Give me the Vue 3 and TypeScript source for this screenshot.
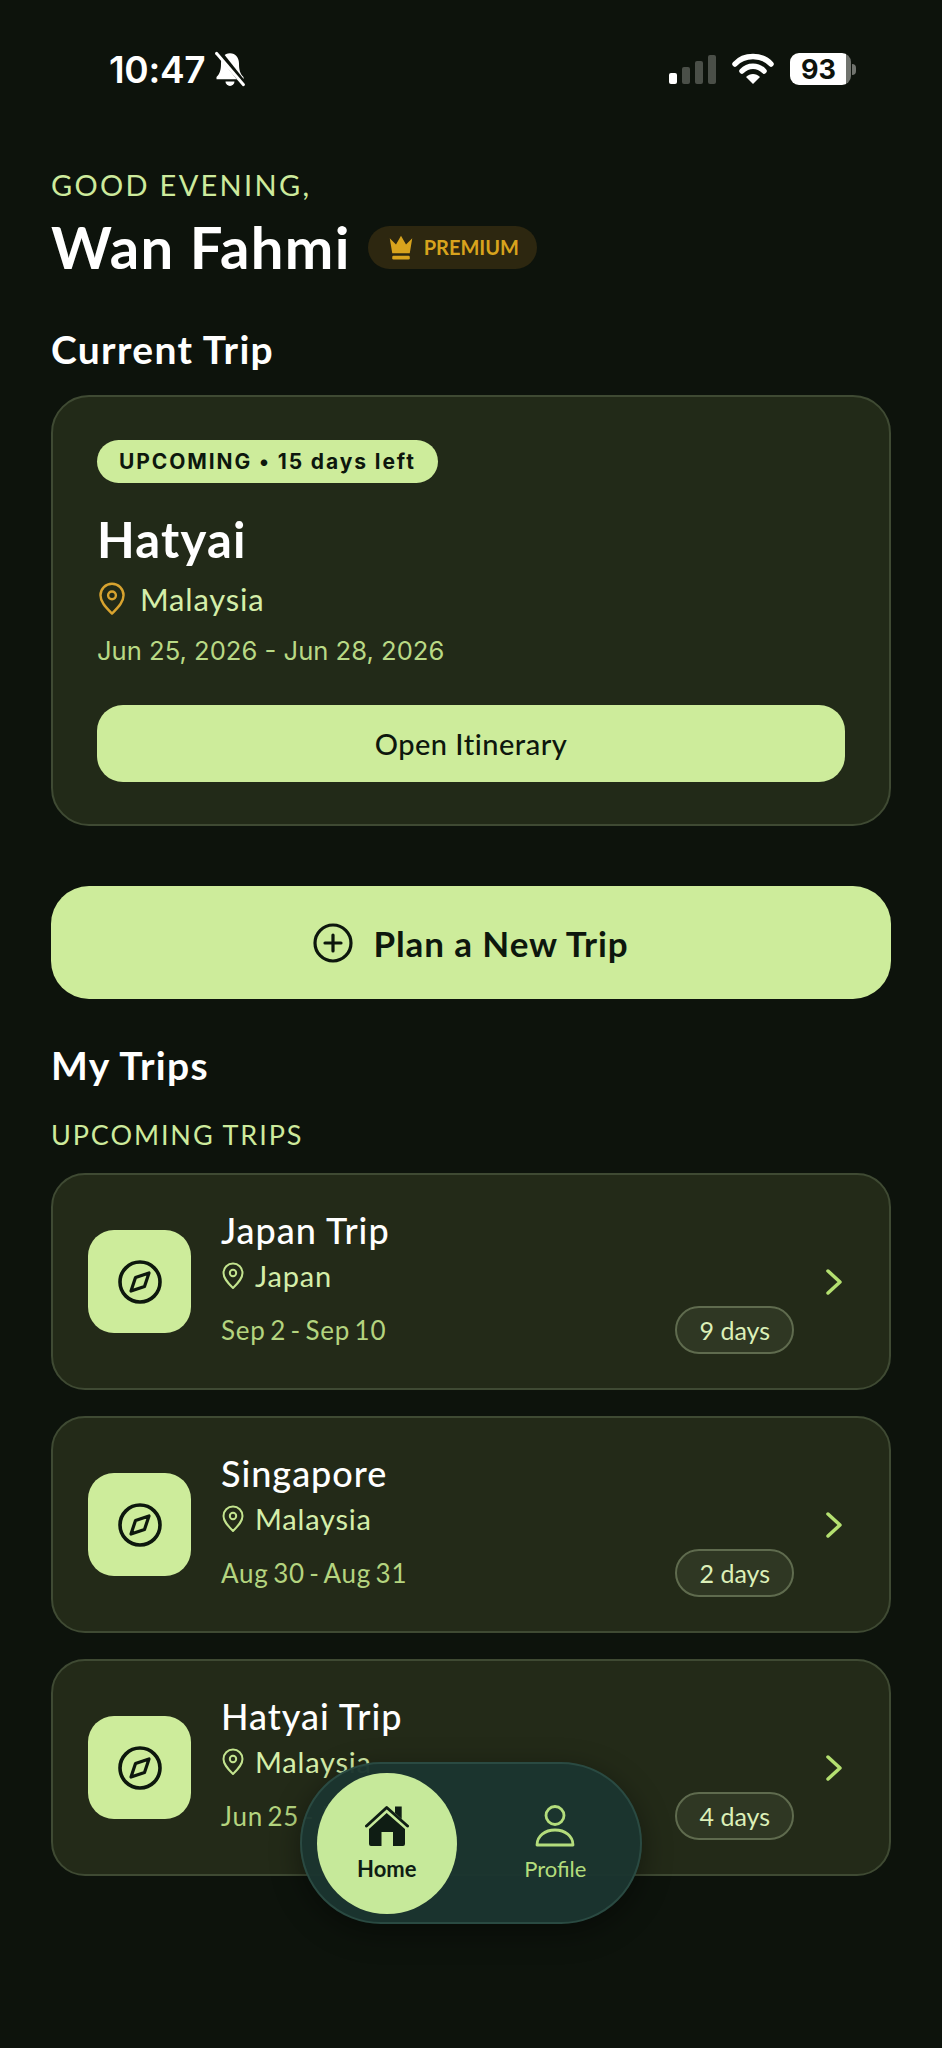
<template>
  <div class="screen">
    <header class="status">
      <div class="status-left">
        <span class="clock">10:47</span>
        <svg class="bell" viewBox="0 0 32 32" width="36" height="36">
          <path d="M16 2c-5 0-8 4-8 9 0 6-1 9-4 12v2h24v-2c-3-3-4-6-4-12 0-5-3-9-8-9z" fill="#fff" />
          <path d="M12 27a4 4 0 0 0 8 0z" fill="#fff" />
          <path d="M6 1l23 29" stroke="#0d130c" stroke-width="5" />
          <path d="M4 2l24 28" stroke="#fff" stroke-width="2.600" stroke-linecap="round" />
        </svg>
      </div>
      <div class="status-right">
        <div class="signal">
          <i class="on"></i><i></i><i></i><i></i>
        </div>
        <svg viewBox="0 0 42 32" width="42" height="32">
          <path d="M3 11C12 1 30 1 39 11" fill="none" stroke="#fff" stroke-width="5.500" stroke-linecap="round" />
          <path d="M10 18C16 11.500 26 11.500 32 18" fill="none" stroke="#fff" stroke-width="5.500" stroke-linecap="round" />
          <path d="M14 24C18 20 24 20 28 24L21 31z" fill="#fff" />
        </svg>
        <div class="battery">
          <div class="battery-body"><span>93</span></div>
          <div class="battery-cap"></div>
        </div>
      </div>
    </header>

    <main class="content">
      <p class="greeting">GOOD EVENING,</p>
      <div class="name-row">
        <h1>Wan Fahmi</h1>
        <span class="premium">
          <svg viewBox="0 0 24 24" width="30" height="30">
            <path d="M3 5l5 5 4-7 4 7 5-5-2 12H5z" fill="#d8a31d" />
            <rect x="5" y="19" width="14" height="3" rx="1" fill="#d8a31d" />
          </svg>
          PREMIUM
        </span>
      </div>

      <h2 class="current-title">Current Trip</h2>
      <section class="current">
        <span class="tag">UPCOMING • 15 days left</span>
        <h3>Hatyai</h3>
        <div class="current-place">
          <svg viewBox="0 0 24 28" width="30" height="34" fill="none" stroke="#d8a32f" stroke-width="2">
            <path d="M12 26C6 20 2.500 16 2.500 11a9.500 9.500 0 0 1 19 0c0 5-3.500 9-9.500 15z" stroke-linejoin="round" />
            <circle cx="12" cy="11" r="3.200" />
          </svg>
          <span>Malaysia</span>
        </div>
        <p class="current-dates">Jun 25, 2026 - Jun 28, 2026</p>
        <button class="open">Open Itinerary</button>
      </section>

      <button class="plan">
        <svg viewBox="0 0 40 40" width="40" height="40" fill="none" stroke="#0d170d" stroke-width="3.200" stroke-linecap="round">
          <circle cx="20" cy="20" r="18" />
          <path d="M20 12v16M12 20h16" />
        </svg>
        Plan a New Trip
      </button>

      <h2 class="my-title">My Trips</h2>
      <p class="sub-title">UPCOMING TRIPS</p>

      <div class="trips">
        <article v-for="t in trips" :key="t.name" class="trip">
          <div class="trip-icon">
            <svg viewBox="0 0 44 44" width="44" height="44" fill="none" stroke="#0d170d" stroke-width="3.600">
              <circle cx="22" cy="22" r="20" />
              <path d="M31 13L26.500 26.500 13 31 17.500 17.500z" stroke-width="3.200" stroke-linejoin="round" />
            </svg>
          </div>
          <div class="trip-body">
            <h4>{{ t.name }}</h4>
            <div class="trip-place">
              <svg viewBox="0 0 24 28" width="24" height="28" fill="none" stroke="#c3e48e" stroke-width="2">
                <path d="M12 26C6 20 2.500 16 2.500 11a9.500 9.500 0 0 1 19 0c0 5-3.500 9-9.500 15z" stroke-linejoin="round" />
                <circle cx="12" cy="11" r="3.200" />
              </svg>
              <span>{{ t.place }}</span>
            </div>
            <div class="trip-foot">
              <span class="trip-dates">{{ t.dates }}</span>
              <span class="days">{{ t.days }}</span>
            </div>
          </div>
          <svg class="chev" viewBox="0 0 18 28" width="18" height="28" fill="none" stroke="#b4e070" stroke-width="3.500" stroke-linecap="round" stroke-linejoin="round">
            <path d="M3 3l12 11L3 25" />
          </svg>
        </article>
      </div>
    </main>

    <nav class="nav">
      <div class="nav-item active">
        <svg viewBox="0 0 44 42" width="44" height="42">
          <path d="M1.500 21L21.700 2.500 42.500 21" fill="none" stroke="#0f1d14" stroke-width="3" stroke-linecap="round" stroke-linejoin="round" />
          <path d="M30 1.500h6.700V14L30 8z" fill="#0f1d14" />
          <path d="M21.700 8L40 24v15a2 2 0 0 1-2 2H28V27H16.500v14H6a2 2 0 0 1-2-2V24z" fill="#0f1d14" />
        </svg>
        <span>Home</span>
      </div>
      <div class="nav-item">
        <svg viewBox="0 0 40 42" width="40" height="42" fill="none" stroke="#b4dd7c" stroke-width="2.800" stroke-linejoin="round">
          <circle cx="20" cy="10.500" r="9" />
          <path d="M2 40c0-9 8-15 18-15s18 6 18 15z" />
        </svg>
        <span>Profile</span>
      </div>
    </nav>
  </div>
</template>

<script setup lang="ts">
interface Trip {
  name: string;
  place: string;
  dates: string;
  days: string;
}

const trips: Trip[] = [
  { name: 'Japan Trip', place: 'Japan', dates: 'Sep 2 - Sep 10', days: '9 days' },
  { name: 'Singapore', place: 'Malaysia', dates: 'Aug 30 - Aug 31', days: '2 days' },
  { name: 'Hatyai Trip', place: 'Malaysia', dates: 'Jun 25 - Jun 28', days: '4 days' },
];
</script>

<style>
html,
body {
  margin: 0;
  background: #0d130c;
}
</style>

<style scoped>
.screen {
  position: relative;
  width: 942px;
  height: 2048px;
  overflow: hidden;
  background: #0d130c;
  color: #fff;
  font-family: Lato, "Noto Sans", sans-serif;
}
h1, h2, h3, h4, p {
  margin: 0;
}
.status {
  display: flex;
  justify-content: space-between;
  align-items: center;
  height: 32px;
  padding: 53px 86px 0 109px;
}
.status-left, .status-right {
  display: flex;
  align-items: center;
}
.status-left { gap: 7px; }
.status-right { gap: 16px; }
.clock {
  font-family: Inter, sans-serif;
  font-size: 37px;
  font-weight: 600;
  letter-spacing: -0.300px;
}
.signal {
  display: flex;
  align-items: flex-end;
  gap: 5px;
  height: 30px;
}
.signal i {
  width: 8px;
  background: #4a4f48;
  border-radius: 2px;
}
.signal i:nth-child(1) { height: 11px; background: #fff; }
.signal i:nth-child(2) { height: 17px; }
.signal i:nth-child(3) { height: 23px; }
.signal i:nth-child(4) { height: 29px; }
.battery {
  display: flex;
  align-items: center;
  gap: 1px;
}
.battery-body {
  width: 61px;
  height: 32px;
  border-radius: 9px;
  background: linear-gradient(90deg, #fff 92%, #70736e 92%);
  display: flex;
  align-items: center;
  justify-content: center;
  padding-right: 4px;
  box-sizing: border-box;
}
.battery-body span {
  color: #0d130c;
  font-family: Inter, sans-serif;
  font-size: 27px;
  font-weight: 700;
}
.battery-cap {
  width: 4px;
  height: 11px;
  background: #70736e;
  border-radius: 0 4px 4px 0;
}
.content {
  padding: 82px 51px 0;
}
.greeting {
  color: #cdea9c;
  font-size: 29px;
  line-height: 36px;
  letter-spacing: 2.300px;
}
.name-row {
  display: flex;
  align-items: center;
  gap: 17px;
  margin-top: 9px;
}
h1 {
  font-size: 58px;
  line-height: 70px;
  font-weight: 700;
  letter-spacing: 1.300px;
}
.premium {
  display: inline-flex;
  align-items: center;
  gap: 8px;
  height: 43px;
  padding: 0 18px 0 18px;
  border-radius: 22px;
  background: #2d2710;
  color: #d8a31d;
  font-size: 20px;
  font-weight: 700;
}
.current-title {
  margin-top: 44px;
  font-size: 39px;
  line-height: 46px;
  font-weight: 700;
  letter-spacing: 1.300px;
}
.current {
  box-sizing: border-box;
  height: 431px;
  margin-top: 23px;
  padding: 43px 44px;
  border: 2px solid #3f4a33;
  border-radius: 38px;
  background: #222a18;
}
.tag {
  display: inline-block;
  padding: 0 22px;
  height: 43px;
  line-height: 43px;
  border-radius: 22px;
  background: #cdec9b;
  color: #0d170d;
  font-family: Inter, sans-serif;
  font-size: 21px;
  font-weight: 700;
  letter-spacing: 1.900px;
}
h3 {
  margin-top: 27px;
  font-size: 49px;
  line-height: 58px;
  font-weight: 700;
  letter-spacing: 1.200px;
}
.current-place {
  display: flex;
  align-items: center;
  gap: 13px;
  margin-top: 12px;
  color: #d5eea9;
  font-size: 31px;
  line-height: 38px;
  letter-spacing: 0.800px;
}
.current-dates {
  margin-top: 15px;
  color: #b9d985;
  font-family: Inter, sans-serif;
  font-size: 25.600px;
  line-height: 36px;
}
.open {
  display: block;
  width: 100%;
  height: 77px;
  margin-top: 36px;
  border: 0;
  border-radius: 26px;
  background: #cdec9b;
  color: #0d170d;
  font-family: inherit;
  font-size: 29px;
  font-weight: 500;
  letter-spacing: 0.500px;
}
.plan {
  display: flex;
  align-items: center;
  justify-content: center;
  gap: 20px;
  width: 100%;
  height: 113px;
  margin-top: 60px;
  border: 0;
  border-radius: 38px;
  background: #cdec9b;
  color: #0d170d;
  font-family: inherit;
  font-size: 35px;
  font-weight: 700;
  letter-spacing: 0.900px;
}
.my-title {
  margin-top: 43px;
  font-size: 39px;
  line-height: 46px;
  font-weight: 700;
  letter-spacing: 1.300px;
}
.sub-title {
  margin-top: 30px;
  color: #cdea9c;
  font-size: 27px;
  line-height: 34px;
  letter-spacing: 1.900px;
}
.trips {
  display: flex;
  flex-direction: column;
  gap: 26px;
  margin-top: 21px;
}
.trip {
  box-sizing: border-box;
  display: flex;
  align-items: center;
  height: 217px;
  padding: 0 46px 0 35px;
  border: 2px solid #3f4a33;
  border-radius: 34px;
  background: #232a18;
}
.trip-icon {
  flex: none;
  display: flex;
  align-items: center;
  justify-content: center;
  width: 103px;
  height: 103px;
  border-radius: 26px;
  background: #cdec9b;
}
.trip-body {
  flex: 1;
  margin: 0 31px 0 30px;
}
h4 {
  font-size: 36px;
  line-height: 42px;
  font-weight: 500;
  letter-spacing: 1px;
}
.trip-place {
  display: flex;
  align-items: center;
  gap: 10px;
  margin-top: 7px;
  color: #d5eea9;
  font-size: 29px;
  line-height: 36px;
  letter-spacing: 0.800px;
}
.trip-foot {
  display: flex;
  align-items: center;
  justify-content: space-between;
  margin-top: 12px;
}
.trip-dates {
  color: #b4d47f;
  font-size: 26px;
  letter-spacing: 0.800px;
  word-spacing: -3px;
}
.days {
  padding: 0 22px;
  height: 44px;
  line-height: 44px;
  border: 2px solid #5f6b4e;
  border-radius: 24px;
  background: #2f3723;
  color: #dcefb8;
  font-size: 25px;
}
.chev {
  flex: none;
}
.nav {
  position: absolute;
  left: 300px;
  top: 1762px;
  box-sizing: border-box;
  display: flex;
  align-items: center;
  width: 342px;
  height: 162px;
  padding: 0 15px;
  border: 2px solid #2a4a42;
  border-radius: 81px;
  background: rgba(27, 53, 48, 0.97);
  box-shadow: 0 8px 30px rgba(0, 0, 0, 0.4);
}
.nav-item {
  display: flex;
  flex-direction: column;
  align-items: center;
  justify-content: center;
  gap: 8px;
  width: 141px;
  height: 141px;
  border-radius: 50%;
  color: #b4dd7c;
  font-size: 22px;
}
.nav-item + .nav-item {
  margin-left: 29px;
}
.nav-item.active {
  background: #c6e99a;
  color: #0f1d14;
  font-weight: 700;
}
</style>
